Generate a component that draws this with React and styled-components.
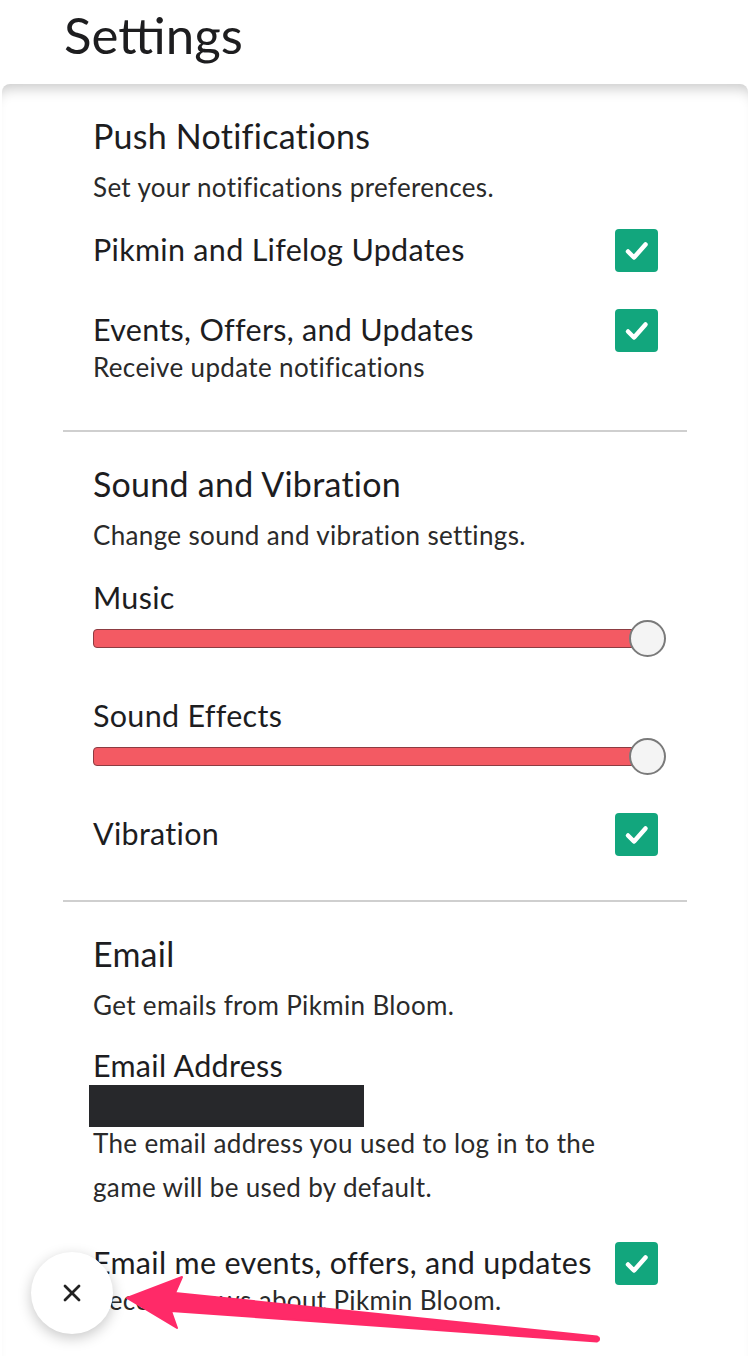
import React from 'react';
import styled, { createGlobalStyle } from 'styled-components';
import { X } from 'lucide-react';

const GlobalStyle = createGlobalStyle`
  body {
    margin: 0;
    background: #ffffff;
    font-family: Lato, "Noto Sans", sans-serif;
    color: #1d1d1f;
  }
`;

const Page = styled.div`
  width: 750px;
  min-height: 1356px;
  position: relative;
  overflow: hidden;
  background: #ffffff;
`;

const Header = styled.header`
  height: 84px;
  padding-left: 64px;
`;

const Title = styled.h1`
  margin: 0;
  font-size: 51px;
  font-weight: 400;
  line-height: 70px;
  color: #1d1d1f;
`;

const Panel = styled.main`
  margin: 0 2px;
  border-radius: 8px 8px 0 0;
  box-shadow: inset 0 14px 14px -10px rgba(0, 0, 0, 0.22);
`;

const Section = styled.section`
  margin: 0 61px;
  padding: 31px 29px 44px 30px;
  border-bottom: ${(p) => (p.last ? 'none' : '2px solid #cfcfcf')};
`;

const Heading = styled.h2`
  margin: 0;
  padding-bottom: 2px;
  font-size: 34px;
  font-weight: 400;
  line-height: 42px;
  letter-spacing: 0.25px;
`;

const Hint = styled.p`
  margin: 12px 0 0;
  padding-bottom: 3px;
  font-size: 26px;
  line-height: 33px;
  letter-spacing: 0.35px;
  color: #2a2a2a;
`;

const Items = styled.div`
  display: flex;
  flex-direction: column;
  gap: ${(p) => p.gap || 37}px;
  margin-top: 22px;
`;

const Row = styled.div`
  display: flex;
  align-items: flex-start;
  justify-content: space-between;
`;

const TextCol = styled.div`
  display: flex;
  flex-direction: column;
`;

const Label = styled.div`
  padding-bottom: 2px;
  font-size: 30.5px;
  line-height: ${(p) => (p.lh || 43) - 2}px;
  letter-spacing: 0.3px;
`;

const Sub = styled.div`
  padding-bottom: 3px;
  font-size: 26px;
  line-height: 31px;
  letter-spacing: 0.35px;
  color: #2a2a2a;
`;

const Box = styled.div`
  width: 43px;
  height: 43px;
  flex-shrink: 0;
  border-radius: 4px;
  background: #12a67d;
  display: flex;
  align-items: center;
  justify-content: center;
`;

const Slider = styled.div`
  position: relative;
  height: 38px;
  margin-right: -8px;
`;

const Track = styled.div`
  position: absolute;
  left: 0;
  right: 18px;
  top: 9px;
  height: 17px;
  border: 1px solid #8c3c42;
  border-radius: 4px;
  background: #f35a63;
`;

const Thumb = styled.div`
  position: absolute;
  right: 0;
  top: 0;
  width: 33px;
  height: 33px;
  border-radius: 50%;
  border: 2px solid #7a7a7a;
  background: #f4f4f4;
`;

const Redacted = styled.div`
  width: 275px;
  height: 42px;
  margin-left: -4px;
  background: #27282b;
`;

const Para = styled.p`
  margin: -6px 0 0;
  font-size: 26px;
  line-height: 44px;
  letter-spacing: 0.35px;
  color: #2a2a2a;
`;

const CloseButton = styled.button`
  position: absolute;
  left: 31px;
  top: 1252px;
  width: 82px;
  height: 82px;
  border: none;
  border-radius: 50%;
  background: #ffffff;
  box-shadow: 0 4px 14px rgba(0, 0, 0, 0.22);
  display: flex;
  align-items: center;
  justify-content: center;
  color: #222;
  padding: 0;
`;

const Overlay = styled.svg`
  position: absolute;
  left: 0;
  top: 0;
  pointer-events: none;
`;

const Check = () => (
  <Box>
    <svg width="43" height="43" viewBox="0 0 43 43">
      <path d="M13 22.5 L19 28.5 L30.5 15.5" fill="none" stroke="#fff" strokeWidth="4.5" strokeLinecap="round" strokeLinejoin="round" />
    </svg>
  </Box>
);

const Volume = () => (
  <Slider>
    <Track />
    <Thumb />
  </Slider>
);

const App = () => (
  <Page>
    <GlobalStyle />
    <Header>
      <Title>Settings</Title>
    </Header>
    <Panel>
      <Section>
        <Heading>Push Notifications</Heading>
        <Hint>Set your notifications preferences.</Hint>
        <Items>
          <Row>
            <Label>Pikmin and Lifelog Updates</Label>
            <Check />
          </Row>
          <Row>
            <TextCol>
              <Label>Events, Offers, and Updates</Label>
              <Sub>Receive update notifications</Sub>
            </TextCol>
            <Check />
          </Row>
        </Items>
      </Section>
      <Section>
        <Heading>Sound and Vibration</Heading>
        <Hint>Change sound and vibration settings.</Hint>
        <Items>
          <div>
            <Label>Music</Label>
            <Volume />
          </div>
          <div>
            <Label>Sound Effects</Label>
            <Volume />
          </div>
          <Row>
            <Label>Vibration</Label>
            <Check />
          </Row>
        </Items>
      </Section>
      <Section last>
        <Heading>Email</Heading>
        <Hint>Get emails from Pikmin Bloom.</Hint>
        <Items gap={33}>
          <div>
            <Label lh={38}>Email Address</Label>
            <Redacted />
            <Para>The email address you used to log in to the game will be used by default.</Para>
          </div>
          <Row>
            <TextCol>
              <Label>Email me events, offers, and updates</Label>
              <Sub>Receive news about Pikmin Bloom.</Sub>
            </TextCol>
            <Check />
          </Row>
        </Items>
      </Section>
    </Panel>
    <CloseButton aria-label="Close">
      <X size={28} strokeWidth={2.4} />
    </CloseButton>
    {/* annotation arrow pointing at the close button */}
    <Overlay width="750" height="1356" viewBox="0 0 750 1356">
      <polygon
        points="127,1298 182,1277 175,1293 597,1336.5 597,1341.5 171,1311 177,1328"
        fill="#ff2a68"
        stroke="#ff2a68"
        strokeWidth="2"
        strokeLinejoin="round"
      />
      <circle cx="597" cy="1339" r="3" fill="#ff2a68" />
    </Overlay>
  </Page>
);

export default App;
